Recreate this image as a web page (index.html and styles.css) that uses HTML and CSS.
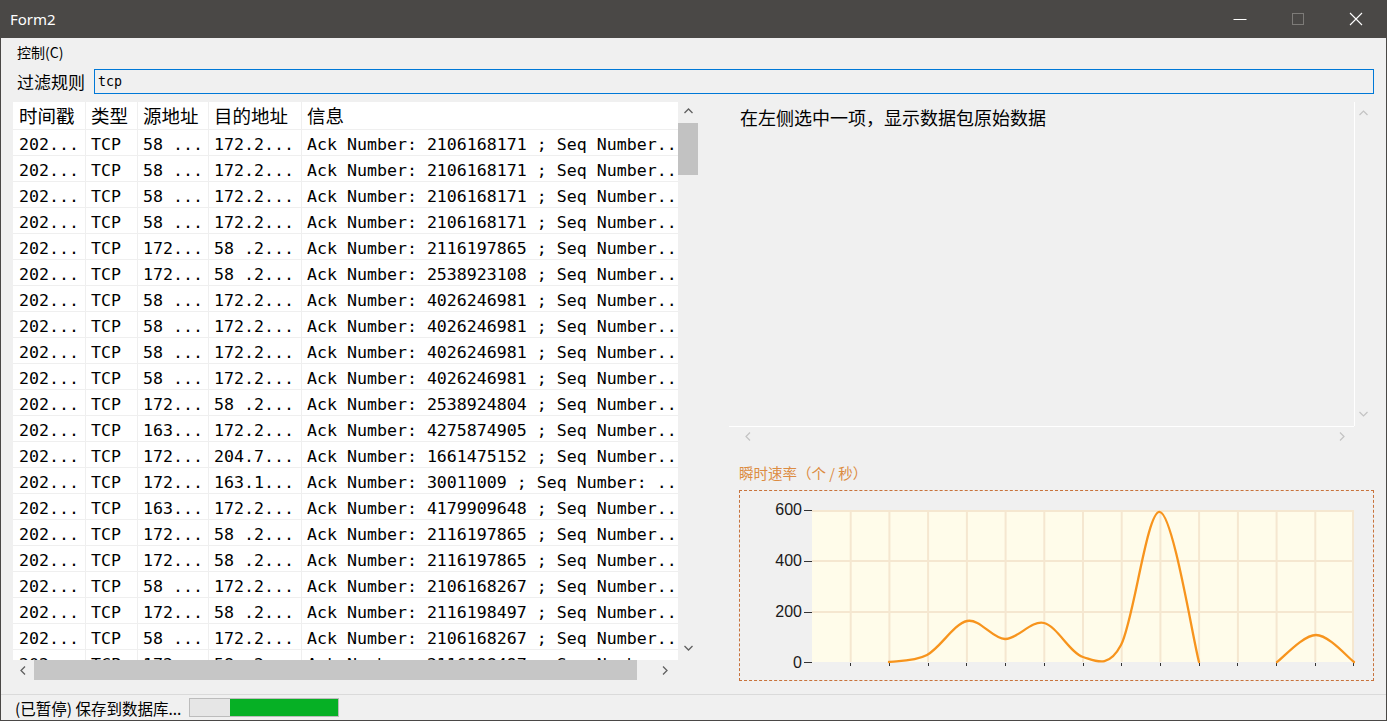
FILE: index.html
```html
<!DOCTYPE html>
<html lang="zh">
<head>
<meta charset="utf-8">
<title>Form2</title>
<link rel="stylesheet" href="styles.css">
</head>
<body>
<div class="window">
  <div class="titlebar">
    <span class="title">Form2</span>
    <div class="controls">
      <span class="ctl"><svg width="14" height="14" viewBox="0 0 14 14"><path d="M0.5 7.5H13.5" stroke="#fff" stroke-width="1"/></svg></span>
      <span class="ctl"><svg width="14" height="14" viewBox="0 0 14 14"><rect x="1.5" y="1.5" width="11" height="11" fill="none" stroke="#7d7b78" stroke-width="1"/></svg></span>
      <span class="ctl"><svg width="14" height="14" viewBox="0 0 14 14"><path d="M1 1L13 13M13 1L1 13" stroke="#fff" stroke-width="1.1"/></svg></span>
    </div>
  </div>

  <div class="menubar"><span>控制(C)</span></div>

  <div class="filter">
    <span class="filter-label">过滤规则</span>
    <div class="filter-input">tcp</div>
  </div>

  <div class="main">
    <div class="left">
      <div class="grid-view">
        <div class="hdr"><div class="c">时间戳</div><div class="c">类型</div><div class="c">源地址</div><div class="c">目的地址</div><div class="c">信息</div></div>
        <div class="row"><div class="c">202...</div><div class="c">TCP</div><div class="c">58 ...</div><div class="c">172.2...</div><div class="c">Ack Number: 2106168171 ; Seq Number..</div></div>
        <div class="row"><div class="c">202...</div><div class="c">TCP</div><div class="c">58 ...</div><div class="c">172.2...</div><div class="c">Ack Number: 2106168171 ; Seq Number..</div></div>
        <div class="row"><div class="c">202...</div><div class="c">TCP</div><div class="c">58 ...</div><div class="c">172.2...</div><div class="c">Ack Number: 2106168171 ; Seq Number..</div></div>
        <div class="row"><div class="c">202...</div><div class="c">TCP</div><div class="c">58 ...</div><div class="c">172.2...</div><div class="c">Ack Number: 2106168171 ; Seq Number..</div></div>
        <div class="row"><div class="c">202...</div><div class="c">TCP</div><div class="c">172...</div><div class="c">58 .2...</div><div class="c">Ack Number: 2116197865 ; Seq Number..</div></div>
        <div class="row"><div class="c">202...</div><div class="c">TCP</div><div class="c">172...</div><div class="c">58 .2...</div><div class="c">Ack Number: 2538923108 ; Seq Number..</div></div>
        <div class="row"><div class="c">202...</div><div class="c">TCP</div><div class="c">58 ...</div><div class="c">172.2...</div><div class="c">Ack Number: 4026246981 ; Seq Number..</div></div>
        <div class="row"><div class="c">202...</div><div class="c">TCP</div><div class="c">58 ...</div><div class="c">172.2...</div><div class="c">Ack Number: 4026246981 ; Seq Number..</div></div>
        <div class="row"><div class="c">202...</div><div class="c">TCP</div><div class="c">58 ...</div><div class="c">172.2...</div><div class="c">Ack Number: 4026246981 ; Seq Number..</div></div>
        <div class="row"><div class="c">202...</div><div class="c">TCP</div><div class="c">58 ...</div><div class="c">172.2...</div><div class="c">Ack Number: 4026246981 ; Seq Number..</div></div>
        <div class="row"><div class="c">202...</div><div class="c">TCP</div><div class="c">172...</div><div class="c">58 .2...</div><div class="c">Ack Number: 2538924804 ; Seq Number..</div></div>
        <div class="row"><div class="c">202...</div><div class="c">TCP</div><div class="c">163...</div><div class="c">172.2...</div><div class="c">Ack Number: 4275874905 ; Seq Number..</div></div>
        <div class="row"><div class="c">202...</div><div class="c">TCP</div><div class="c">172...</div><div class="c">204.7...</div><div class="c">Ack Number: 1661475152 ; Seq Number..</div></div>
        <div class="row"><div class="c">202...</div><div class="c">TCP</div><div class="c">172...</div><div class="c">163.1...</div><div class="c">Ack Number: 30011009 ; Seq Number: ..</div></div>
        <div class="row"><div class="c">202...</div><div class="c">TCP</div><div class="c">163...</div><div class="c">172.2...</div><div class="c">Ack Number: 4179909648 ; Seq Number..</div></div>
        <div class="row"><div class="c">202...</div><div class="c">TCP</div><div class="c">172...</div><div class="c">58 .2...</div><div class="c">Ack Number: 2116197865 ; Seq Number..</div></div>
        <div class="row"><div class="c">202...</div><div class="c">TCP</div><div class="c">172...</div><div class="c">58 .2...</div><div class="c">Ack Number: 2116197865 ; Seq Number..</div></div>
        <div class="row"><div class="c">202...</div><div class="c">TCP</div><div class="c">58 ...</div><div class="c">172.2...</div><div class="c">Ack Number: 2106168267 ; Seq Number..</div></div>
        <div class="row"><div class="c">202...</div><div class="c">TCP</div><div class="c">172...</div><div class="c">58 .2...</div><div class="c">Ack Number: 2116198497 ; Seq Number..</div></div>
        <div class="row"><div class="c">202...</div><div class="c">TCP</div><div class="c">58 ...</div><div class="c">172.2...</div><div class="c">Ack Number: 2106168267 ; Seq Number..</div></div>
        <div class="row"><div class="c">202...</div><div class="c">TCP</div><div class="c">172...</div><div class="c">58 .2...</div><div class="c">Ack Number: 2116198497 ; Seq Number..</div></div>
      </div>
      <div class="vscroll">
        <div class="arrow-up"><svg width="9" height="6" viewBox="0 0 9 6"><path d="M0.5 5L4.5 1L8.5 5" fill="none" stroke="#606060" stroke-width="1.3"/></svg></div>
        <div class="vthumb"></div>
        <div class="spacer"></div>
        <div class="arrow-down"><svg width="9" height="6" viewBox="0 0 9 6"><path d="M0.5 1L4.5 5L8.5 1" fill="none" stroke="#606060" stroke-width="1.3"/></svg></div>
      </div>
      <div class="hscroll">
        <div class="arrow-left"><svg width="6" height="9" viewBox="0 0 6 9"><path d="M5 0.5L1 4.5L5 8.5" fill="none" stroke="#606060" stroke-width="1.3"/></svg></div>
        <div class="hthumb"></div>
        <div class="spacer"></div>
        <div class="arrow-right"><svg width="6" height="9" viewBox="0 0 6 9"><path d="M1 0.5L5 4.5L1 8.5" fill="none" stroke="#606060" stroke-width="1.3"/></svg></div>
      </div>
      <div class="corner"></div>
    </div>

    <div class="right">
      <div class="textbox">
        <div class="tb-content">在左侧选中一项，显示数据包原始数据</div>
        <div class="tb-vscroll">
          <svg width="9" height="6" viewBox="0 0 9 6"><path d="M0.5 5L4.5 1L8.5 5" fill="none" stroke="#c3c3c3" stroke-width="1.2"/></svg>
          <svg width="9" height="6" viewBox="0 0 9 6"><path d="M0.5 1L4.5 5L8.5 1" fill="none" stroke="#c3c3c3" stroke-width="1.2"/></svg>
        </div>
        <div class="tb-hscroll">
          <svg width="6" height="9" viewBox="0 0 6 9"><path d="M5 0.5L1 4.5L5 8.5" fill="none" stroke="#c3c3c3" stroke-width="1.2"/></svg>
          <svg width="6" height="9" viewBox="0 0 6 9"><path d="M1 0.5L5 4.5L1 8.5" fill="none" stroke="#c3c3c3" stroke-width="1.2"/></svg>
        </div>
        <div class="tb-corner"></div>
      </div>
      <div class="chart-label">瞬时速率（个 / 秒）</div>
      <div class="chart">
        <svg class="chart-svg" width="633" height="189" viewBox="740 491 633 189">
          <rect x="812" y="510" width="542" height="152" fill="#fffcea"/>
          <g stroke="#f5e7d0" stroke-width="2">
            <path d="M850.7 510V662M889.4 510V662M928.1 510V662M966.9 510V662M1005.6 510V662M1044.3 510V662M1083 510V662M1121.7 510V662M1160.4 510V662M1199.1 510V662M1237.9 510V662M1276.6 510V662M1315.3 510V662M1353 510V662"/>
            <path d="M812 511H1354M812 561H1354M812 612H1354"/>
          </g>
          <g stroke="#333" stroke-width="1">
            <path d="M804 510.5H812M804 561.5H812M804 612.5H812M804 662.5H812"/>
            <path d="M850.5 663V666M889.5 663V666M928.5 663V666M966.5 663V666M1005.5 663V666M1044.5 663V666M1083.5 663V666M1121.5 663V666M1160.5 663V666M1199.5 663V666M1237.5 663V666M1276.5 663V666M1315.5 663V666M1353.5 663V666"/>
          </g>
          <g class="ylabels">
            <text x="802" y="515" text-anchor="end">600</text>
            <text x="802" y="566" text-anchor="end">400</text>
            <text x="802" y="617" text-anchor="end">200</text>
            <text x="802" y="668" text-anchor="end">0</text>
          </g>
          <path d="M889,662 C895.3,660.8 914,661.8 927,655 C940,648.2 954,623.7 967,621 C980,618.3 992.2,638.7 1005,639 C1017.8,639.3 1031,620 1044,623 C1057,626 1070.2,653.3 1083,657 C1095.8,660.7 1108.2,669.2 1121,645 C1133.8,620.8 1147,509.2 1160,512 C1173,514.8 1192.5,637 1199,662" fill="none" stroke="#f7941d" stroke-width="2.3" stroke-linecap="round"/>
          <path d="M1277,662 C1283.5,657.5 1303.2,635 1316,635 C1328.8,635 1347.7,657.5 1354,662" fill="none" stroke="#f7941d" stroke-width="2.3" stroke-linecap="round"/>
        </svg>
      </div>
    </div>
  </div>

  <div class="statusbar">
    <span class="status-text">(已暂停) 保存到数据库...</span>
    <div class="progress"><div class="progress-fill"></div></div>
  </div>
</div>
</body>
</html>
```

FILE: styles.css
```css
* { box-sizing: border-box; }
html, body { margin: 0; padding: 0; }
body {
  width: 1387px;
  height: 721px;
  overflow: hidden;
  background: #f0f0f0;
  font-family: "Noto Sans CJK SC", sans-serif;
  color: #000;
}
.window {
  width: 1387px;
  height: 721px;
  display: flex;
  flex-direction: column;
  border: 1px solid #4a4846;
  border-top: 0;
  background: #f0f0f0;
}
.titlebar {
  flex: none;
  height: 38px;
  margin: 0 -1px;
  padding: 0 2px 0 10px;
  background: #4a4846;
  display: flex;
  align-items: center;
}
.title {
  font-family: "Noto Sans", sans-serif;
  font-size: 15px;
  color: #fff;
}
.controls { margin-left: auto; display: flex; }
.ctl {
  width: 58px;
  height: 38px;
  display: flex;
  align-items: center;
  justify-content: center;
}
.menubar {
  flex: none;
  height: 28px;
  padding-left: 16px;
  display: flex;
  align-items: center;
  font-size: 14px;
}
.filter {
  flex: none;
  height: 31px;
  padding-left: 16px;
  display: flex;
  align-items: center;
}
.filter-label { width: 77px; font-size: 17px; }
.filter-input {
  width: 1280px;
  height: 25px;
  border: 1px solid #0078d7;
  background: #f0f0f0;
  font-family: "DejaVu Sans Mono", monospace;
  font-size: 13.3px;
  line-height: 23px;
  padding-left: 3px;
}
.main {
  flex: none;
  height: 579px;
  margin-top: 5px;
  padding-left: 12px;
  display: flex;
}
.left {
  display: grid;
  grid-template-columns: 665px 20px;
  grid-template-rows: 558px 20px;
  align-self: flex-start;
}
.grid-view { background: #fff; overflow: hidden; }
.hdr, .row {
  display: grid;
  grid-template-columns: 73px 52px 71px 93px 1fr;
  border-bottom: 1px solid #efefef;
}
.hdr { height: 28px; font-size: 18.5px; }
.hdr .c { line-height: 27px; }
.row {
  height: 26px;
  font-family: "DejaVu Sans Mono", monospace;
  font-size: 16.6px;
}
.row .c { line-height: 29px; }
.c {
  border-right: 1px solid #efefef;
  padding-left: 5px;
  white-space: nowrap;
  overflow: hidden;
}
.c:first-child { padding-left: 6px; }
.c:last-child { border-right: 0; }
.vscroll {
  display: flex;
  flex-direction: column;
  align-items: center;
}
.arrow-up { height: 21px; padding-top: 6px; }
.arrow-up svg, .arrow-down svg, .arrow-left svg, .arrow-right svg { display: block; }
.vthumb { width: 100%; height: 52px; background: #c2c2c2; }
.spacer { flex: 1; }
.arrow-down { height: 23px; padding-top: 8px; }
.hscroll { display: flex; align-items: stretch; }
.arrow-left { width: 21px; display: flex; align-items: center; padding-left: 7px; }
.hthumb { width: 603px; background: #c6c6c6; }
.arrow-right { width: 24px; display: flex; align-items: center; padding-left: 8px; }
.right {
  margin-left: 31px;
  width: 645px;
  display: flex;
  flex-direction: column;
}
.textbox {
  display: grid;
  grid-template-columns: 625px 17px;
  grid-template-rows: 324px 19px;
}
.tb-content {
  padding: 3px 0 0 11px;
  font-size: 18px;
  line-height: 24px;
}
.tb-vscroll {
  border-left: 1px solid #fff;
  display: flex;
  flex-direction: column;
  align-items: center;
  justify-content: space-between;
  padding: 8px 0 9px;
}
.tb-vscroll svg, .tb-hscroll svg { display: block; }
.tb-hscroll {
  border-top: 1px solid #fff;
  display: flex;
  align-items: center;
  justify-content: space-between;
  padding: 0 9px 0 16px;
}
.chart-label {
  margin: 18px 0 0 10px;
  font-size: 14.5px;
  line-height: 20px;
  color: #dc8c42;
}
.chart {
  margin: 7px 0 0 10px;
  width: 635px;
  height: 191px;
  border: 1px dashed #c8733c;
}
.chart-svg { display: block; }
.ylabels text {
  font-family: "Liberation Sans", Arial, sans-serif;
  font-size: 16px;
  fill: #1a1a1a;
}
.statusbar {
  flex: none;
  margin-top: auto;
  height: 26px;
  border-top: 1px solid #dadada;
  padding-left: 14px;
  display: flex;
  align-items: center;
}
.status-text { width: 174px; font-size: 15.5px; white-space: nowrap; }
.progress {
  width: 150px;
  height: 19px;
  border: 1px solid #bcbcbc;
  background: #e6e6e6;
}
.progress-fill {
  margin-left: 40px;
  width: 108px;
  height: 100%;
  background: #06b025;
}
```
